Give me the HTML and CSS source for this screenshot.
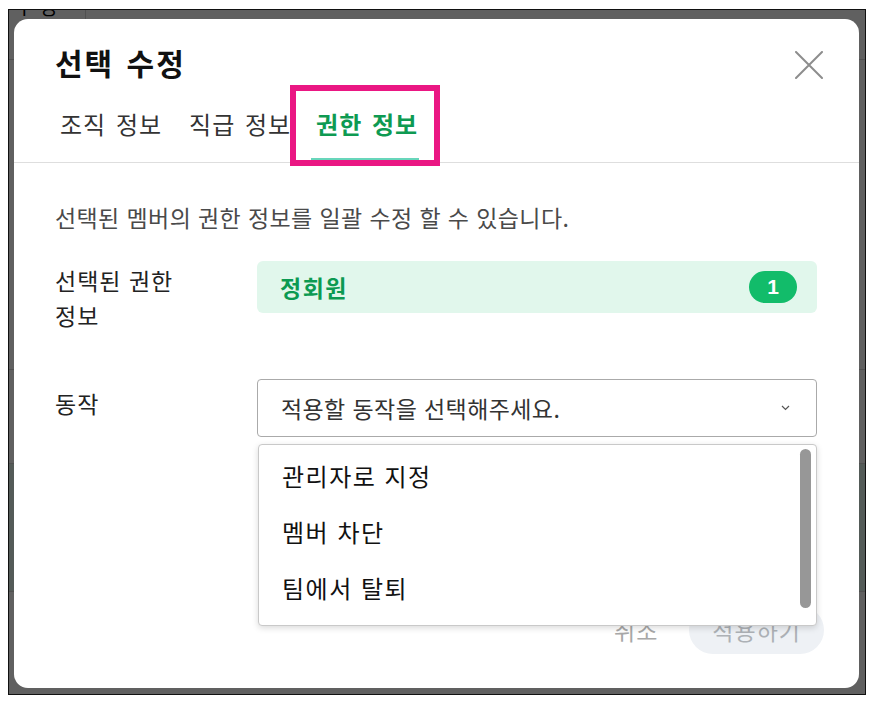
FILE: index.html
```html
<!DOCTYPE html>
<html lang="ko">
<head>
<meta charset="utf-8">
<title>선택 수정</title>
<link rel="stylesheet" href="styles.css">
</head>
<body>
<div class="frame">
  <div class="page">
    <div class="page-row page-head"><span class="page-cell">ㅣ 엉</span></div>
    <div class="page-row page-r2"></div>
    <div class="page-row page-r3"></div>
    <div class="page-row page-r4"></div>
    <div class="page-row page-r5"><span class="page-foot">om</span></div>
  </div>
  <div class="overlay">
    <div class="modal">
      <button class="close" aria-label="닫기">
        <svg width="28" height="28" viewBox="0 0 28 28"><path d="M1 1L27 27M27 1L1 27" stroke="#8d8d8d" stroke-width="2" fill="none" stroke-linecap="round"/></svg>
      </button>
      <h1 class="title">선택 수정</h1>
      <nav class="tabs">
        <span class="tab">조직 정보</span>
        <span class="tab">직급 정보</span>
        <span class="tab active">권한 정보</span>
      </nav>
      <div class="highlight"></div>
      <div class="body">
        <p class="desc">선택된 멤버의 권한 정보를 일괄 수정 할 수 있습니다.</p>
        <div class="field">
          <div class="label">선택된 권한 정보</div>
          <div class="chip-box"><span class="chip-name">정회원</span><span class="badge">1</span></div>
        </div>
        <div class="field field-action">
          <div class="label label-action">동작</div>
          <div class="select-wrap">
            <div class="select">
              <span class="placeholder">적용할 동작을 선택해주세요.</span>
              <svg class="chevron" width="9" height="6" viewBox="0 0 9 6"><path d="M1 1L4.5 4.5L8 1" stroke="#555" stroke-width="1.2" fill="none"/></svg>
            </div>
            <div class="menu">
              <ul class="menu-list">
                <li class="menu-item">관리자로 지정</li>
                <li class="menu-item">멤버 차단</li>
                <li class="menu-item">팀에서 탈퇴</li>
              </ul>
              <div class="thumb"></div>
            </div>
          </div>
        </div>
      </div>
      <div class="footer">
        <button class="btn-cancel">취소</button>
        <button class="btn-apply">적용하기</button>
      </div>
    </div>
  </div>
</div>
</body>
</html>
```

FILE: styles.css
```css
* { box-sizing: border-box; }

body {
  margin: 0;
  background: #ffffff;
  font-family: "Noto Sans CJK KR", "Noto Sans", sans-serif;
}

.frame {
  margin: 9px 0 0 8px;
  width: 858px;
  height: 686px;
  border: 1px solid #111;
  position: relative;
  overflow: hidden;
  background: #fff;
}

.page {
  display: flex;
  flex-direction: column;
  height: 100%;
}

.page-row {
  border-bottom: 1px solid #d4d4d4;
  flex: none;
}

.page-head {
  height: 50px;
  overflow: hidden;
  display: flex;
}

.page-cell {
  width: 77px;
  border-right: 1px solid #d4d4d4;
  padding-left: 6px;
  margin-top: -15px;
  font-size: 20px;
  line-height: 24px;
  color: #000;
  height: 70px;
}

.page-r2 { height: 310px; }
.page-r3 { height: 94px; }
.page-r4 { height: 128px; background: #e0f2ea; }
.page-r5 {
  flex: 1;
  border-bottom: none;
  display: flex;
  align-items: flex-end;
  padding-left: 706px;
}

.page-foot {
  font-size: 20px;
  line-height: 20px;
  margin-bottom: -14px;
  color: #000;
}

.overlay {
  position: absolute;
  inset: 0;
  background: rgba(0, 0, 0, 0.625);
  padding: 9px 0 0 5px;
}

.modal {
  width: 845px;
  height: 669px;
  background: #fff;
  border-radius: 14px;
  position: relative;
  display: flex;
  flex-direction: column;
}

.close {
  position: absolute;
  top: 32px;
  left: 781px;
  width: 28px;
  height: 28px;
  padding: 0;
  border: none;
  background: none;
}

.close svg { display: block; }

.title {
  margin: 0;
  padding: 23px 0 0 41px;
  font-size: 30px;
  line-height: 40px;
  font-weight: 700;
  letter-spacing: 2px;
  word-spacing: 2px;
  color: #111;
}

.tabs {
  display: flex;
  gap: 14px;
  padding-left: 39px;
  border-bottom: 1px solid #dedede;
}

.tab {
  padding: 25px 6px 17px 7px;
  font-size: 24px;
  line-height: 34px;
  letter-spacing: 1px;
  word-spacing: 2px;
  color: #333;
  border-bottom: 2px solid transparent;
  margin-bottom: 2px;
}

.tab.active {
  padding-left: 5px;
  padding-right: 1px;
  color: #0e9a52;
  font-weight: 700;
  border-bottom-color: #68d6bb;
}

.highlight {
  position: absolute;
  left: 276px;
  top: 66px;
  width: 150px;
  height: 81px;
  border: 6px solid #ea1783;
}

.body {
  padding: 0 42px 0 41px;
}

.desc {
  margin: 38px 0 28px;
  font-size: 23px;
  line-height: 32px;
  letter-spacing: 0.4px;
  color: #4a4a4a;
}

.field {
  display: grid;
  grid-template-columns: 202px 1fr;
}

.label {
  width: 150px;
  padding-top: 2px;
  font-size: 23px;
  line-height: 35px;
  letter-spacing: 1px;
  word-break: keep-all;
  color: #222;
}

.chip-box {
  height: 52px;
  background: #e1f7ec;
  border-radius: 6px;
  display: flex;
  align-items: center;
  justify-content: space-between;
  padding: 0 20px 0 23px;
}

.chip-name {
  font-size: 23px;
  font-weight: 700;
  letter-spacing: 1.5px;
  color: #0c9a52;
}

.badge {
  width: 48px;
  height: 32px;
  border-radius: 16px;
  background: #12bc6a;
  color: #fff;
  font-family: "Liberation Sans", Arial, sans-serif;
  font-weight: 700;
  font-size: 21px;
  display: flex;
  align-items: center;
  justify-content: center;
}

.field-action {
  margin-top: 46px;
}

.label-action {
  padding-top: 7px;
}

.select-wrap {
  position: relative;
}

.select {
  height: 58px;
  border: 1px solid #aaaaaa;
  border-radius: 4px;
  display: flex;
  align-items: center;
  justify-content: space-between;
  padding: 0 26px 0 23px;
}

.placeholder {
  font-size: 23px;
  letter-spacing: 0.4px;
  color: #333;
}

.chevron { display: block; }

.menu {
  position: absolute;
  top: calc(100% + 7px);
  left: 1px;
  right: 0;
  background: #fff;
  border: 1px solid #c9c9c9;
  border-radius: 4px;
  box-shadow: 0 2px 6px rgba(0, 0, 0, 0.15);
  z-index: 2;
}

.menu-list {
  list-style: none;
  margin: 0;
  padding: 3px 0 9px;
}

.menu-item {
  font-size: 24px;
  line-height: 56px;
  letter-spacing: 1.5px;
  padding-left: 23px;
  color: #111;
}

.thumb {
  position: absolute;
  right: 5px;
  top: 4px;
  width: 11px;
  height: 159px;
  border-radius: 6px;
  background: #979797;
}

.footer {
  margin-top: auto;
  padding: 0 35px 34px 0;
  display: flex;
  justify-content: flex-end;
  align-items: center;
}

.btn-cancel,
.btn-apply {
  font-family: inherit;
  font-size: 23px;
  letter-spacing: 1px;
  border: none;
}

.btn-cancel {
  background: none;
  padding: 0 16px;
  margin-right: 15px;
  color: #a8a8a8;
}

.btn-apply {
  height: 48px;
  padding: 0 23px;
  border-radius: 24px;
  background: #eef1f5;
  color: #adb1b6;
}
```
